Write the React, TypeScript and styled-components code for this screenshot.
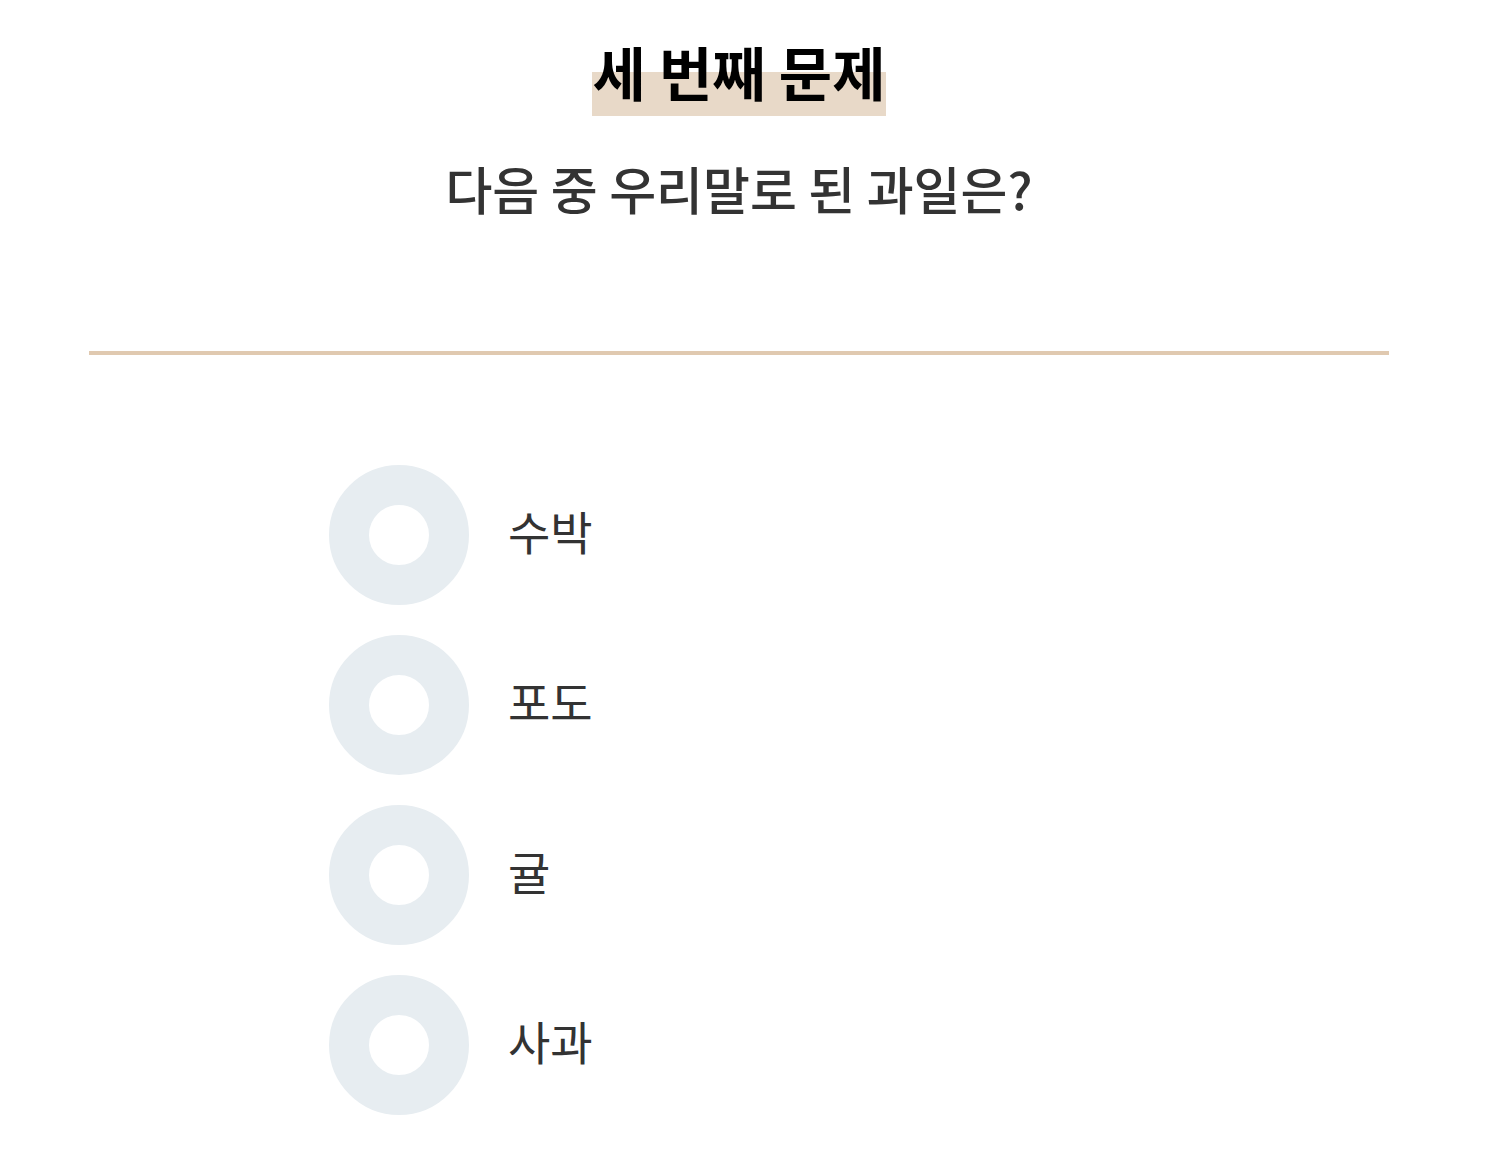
import React, { useState } from "react";
import styled, { createGlobalStyle } from "styled-components";

const Global = createGlobalStyle`
  html, body { margin: 0; padding: 0; background: #fff; }
  body { font-family: "Noto Sans CJK KR", "Noto Sans", sans-serif; }
`;

const Page = styled.div`
  width: 1300px;
  margin-left: 89px;
  display: flex;
  flex-direction: column;
  align-items: center;
`;

const TitleWrap = styled.div`
  margin-top: 34px;
  display: flex;
  justify-content: center;
`;

const Title = styled.h1`
  margin: 0;
  font-size: 58px;
  line-height: 74px;
  font-weight: 700;
  color: #000;
  background: linear-gradient(to bottom, transparent 46%, #e8d9c8 46%);
  padding: 0 0 8px;
  height: 82px;
  box-sizing: border-box;
`;

const Question = styled.h2`
  margin: 39px 0 0;
  font-size: 51px;
  line-height: 66px;
  font-weight: 500;
  color: #333;
`;

const Divider = styled.hr`
  width: 100%;
  margin: 130px 0 0;
  border: none;
  height: 4px;
  background: #e0c9b0;
`;

const List = styled.ul`
  list-style: none;
  margin: 110px 0 0;
  padding: 0 0 0 240px;
  align-self: stretch;
  display: flex;
  flex-direction: column;
  gap: 30px;
`;

const Item = styled.li`
  display: flex;
  align-items: center;
  gap: 39px;
  cursor: pointer;
`;

const Ring = styled.span<{ $checked: boolean }>`
  width: 140px;
  height: 140px;
  box-sizing: border-box;
  border-radius: 50%;
  border: 40px solid ${(p) => (p.$checked ? "#e0c9b0" : "#e7edf1")};
  background: #fff;
  flex-shrink: 0;
`;

const Label = styled.span`
  font-size: 46px;
  font-weight: 400;
  color: #333;
  line-height: 1;
  padding-bottom: 10px;
`;

const options = ["수박", "포도", "귤", "사과"];

export default function App() {
  const [sel, setSel] = useState<number | null>(null);
  return (
    <>
      <Global />
      <Page>
        <TitleWrap>
          <Title>세 번째 문제</Title>
        </TitleWrap>
        <Question>다음 중 우리말로 된 과일은?</Question>
        <Divider />
        <List>
          {options.map((o, i) => (
            <Item key={o} onClick={() => setSel(i)}>
              <Ring $checked={sel === i} />
              <Label>{o}</Label>
            </Item>
          ))}
        </List>
      </Page>
    </>
  );
}
